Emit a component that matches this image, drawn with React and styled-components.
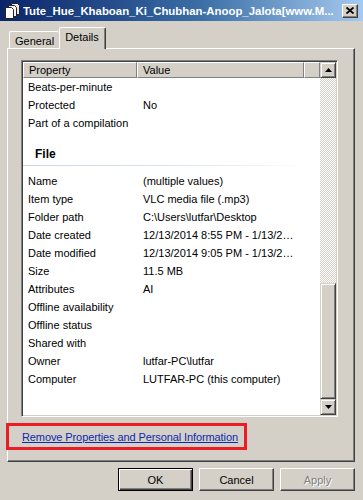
import React from "react";
import styled, { createGlobalStyle } from "styled-components";

const GlobalStyle = createGlobalStyle`
  html, body {
    margin: 0;
    padding: 0;
    background: #d4d0c8;
  }
  body {
    font-family: "Liberation Sans", Arial, sans-serif;
    font-size: 11px;
    color: #000;
  }
`;

const Window = styled.div`
  width: 363px;
  height: 500px;
  background: #d4d0c8;
  display: flex;
  flex-direction: column;
  overflow: hidden;
`;

const TitleBar = styled.div`
  height: 21px;
  display: flex;
  align-items: center;
  padding: 0 5px 0 4px;
  background: linear-gradient(to right, #0a246a 0%, #3a6ea5 55%, #a6caf0 100%);
`;

const TitleText = styled.div`
  flex: 1;
  margin-left: 3px;
  color: #fff;
  font-weight: bold;
  font-size: 11.4px;
  white-space: nowrap;
  overflow: hidden;
`;

const CloseButton = styled.div`
  width: 16px;
  height: 14px;
  box-sizing: border-box;
  background: #d4d0c8;
  border: 1px solid;
  border-color: #fff #404040 #404040 #fff;
  box-shadow: inset -1px -1px #808080;
  display: flex;
  align-items: center;
  justify-content: center;
`;

const Body = styled.div`
  padding: 6px 8px 0 7px;
  display: flex;
  flex-direction: column;
`;

const TabStrip = styled.div`
  display: flex;
  align-items: flex-end;
  height: 21px;
  padding-left: 2px;
  position: relative;
  z-index: 1;
`;

const Tab = styled.div`
  box-sizing: border-box;
  height: ${(p) => (p.$active ? "22px" : "17px")};
  margin-bottom: ${(p) => (p.$active ? "-1px" : "0")};
  padding: ${(p) => (p.$active ? "3px 6px 0 5px" : "3px 5px 0 5px")};
  background: #d4d0c8;
  border-top: 1px solid #fff;
  border-left: 1px solid #fff;
  border-right: 1px solid #404040;
  box-shadow: inset -1px 0 #808080;
  border-radius: 2px 2px 0 0;
  white-space: nowrap;
  ${(p) => !p.$active && "border-right: none; box-shadow: none;"}
`;

const Panel = styled.div`
  box-sizing: border-box;
  height: 414px;
  border: 1px solid;
  border-color: #fff #404040 #404040 #fff;
  box-shadow: inset -1px -1px #808080;
  padding: 11px 14px 0 13px;
  display: flex;
  flex-direction: column;
`;

const ListView = styled.div`
  box-sizing: border-box;
  width: 317px;
  height: 357px;
  border: 1px solid;
  border-color: #808080 #fff #fff #808080;
  box-shadow: inset 1px 1px #404040, inset -1px -1px #d4d0c8;
  padding: 1px;
  display: flex;
  background: #fff;
`;

const ListContent = styled.div`
  flex: 1;
  overflow: hidden;
`;

const HeaderRow = styled.div`
  display: flex;
  height: 16px;
`;

const HeaderCell = styled.div`
  box-sizing: border-box;
  width: ${(p) => p.$w};
  flex: ${(p) => (p.$fill ? 1 : "none")};
  height: 16px;
  line-height: 14px;
  padding-left: 5px;
  background: #d4d0c8;
  border-top: 1px solid #fff;
  border-left: 1px solid #fff;
  border-right: 1px solid #808080;
  border-bottom: 1px solid #808080;
`;

const Row = styled.div`
  display: grid;
  grid-template-columns: 114px 165px;
  height: 18px;
  line-height: 18px;
  white-space: nowrap;
`;

const Cell = styled.div`
  padding-left: ${(p) => (p.$value ? "6px" : "5px")};
  overflow: hidden;
`;

const Group = styled.div`
  padding-top: 13px;
  height: 40px;
  box-sizing: border-box;
`;

const GroupTitle = styled.div`
  font-weight: bold;
  font-size: 12px;
  line-height: 18px;
  padding-left: 12px;
`;

const GroupLine = styled.div`
  height: 1px;
  margin-top: 2px;
  width: 290px;
  background: linear-gradient(to right, #c5d5ea 0%, #dfe8f3 60%, #ffffff 100%);
`;

const ScrollBar = styled.div`
  width: 16px;
  display: flex;
  flex-direction: column;
  background-color: #fff;
  background-image: repeating-conic-gradient(#d4d0c8 0 25%, #ffffff 0 50%);
  background-size: 2px 2px;
`;

const ScrollButton = styled.div`
  box-sizing: border-box;
  width: 16px;
  height: 16px;
  background: #d4d0c8;
  border: 1px solid;
  border-color: #d4d0c8 #404040 #404040 #d4d0c8;
  box-shadow: inset 1px 1px #fff, inset -1px -1px #808080;
  display: flex;
  align-items: center;
  justify-content: center;
`;

const Track = styled.div`
  flex: 1;
  display: flex;
  flex-direction: column;
  justify-content: flex-end;
`;

const Thumb = styled.div`
  box-sizing: border-box;
  height: 116px;
  background: #d4d0c8;
  border: 1px solid;
  border-color: #d4d0c8 #404040 #404040 #d4d0c8;
  box-shadow: inset 1px 1px #fff, inset -1px -1px #808080;
`;

const LinkBox = styled.div`
  box-sizing: border-box;
  width: 241px;
  height: 27px;
  margin: 6px 0 0 -15px;
  border: 3px solid #ed1c24;
  padding-left: 13px;
  display: flex;
  align-items: center;
`;

const Link = styled.a`
  color: #0a2ab0;
  text-decoration: underline;
  cursor: pointer;
  white-space: nowrap;
  letter-spacing: -0.1px;
`;

const ButtonRow = styled.div`
  display: flex;
  justify-content: flex-end;
  gap: 6px;
  margin-top: 6px;
`;

const Button = styled.button`
  box-sizing: border-box;
  width: 75px;
  height: 23px;
  padding: 0;
  font-family: "Liberation Sans", Arial, sans-serif;
  font-size: 11px;
  background: #d4d0c8;
  color: ${(p) => (p.disabled ? "#808080" : "#000")};
  text-shadow: ${(p) => (p.disabled ? "1px 1px #fff" : "none")};
  border: 1px solid;
  border-color: ${(p) =>
    p.$default ? "#000" : "#fff #404040 #404040 #fff"};
  box-shadow: ${(p) =>
    p.$default
      ? "inset 1px 1px #fff, inset -1px -1px #404040, inset -2px -2px #808080"
      : "inset -1px -1px #808080"};
`;

const Arrow = ({ down }) => (
  <svg width="7" height="4" viewBox="0 0 7 4">
    <path d={down ? "M0 0h7L3.5 4z" : "M3.5 0L7 4H0z"} fill="#000" />
  </svg>
);

const AppIcon = () => (
  <svg width="16" height="16" viewBox="0 0 16 16">
    <path d="M7.5 0.5h6l2 2v9h-8z" fill="#e8e8e8" stroke="#222" />
    <path d="M4.5 2.5h6l2 2v9h-8z" fill="#f2f2f2" stroke="#222" />
    <path d="M1.5 4.5h6l2 2v9h-8z" fill="#fff" stroke="#222" />
  </svg>
);

const CloseGlyph = () => (
  <svg width="8" height="7" viewBox="0 0 8 7">
    <path d="M0.5 0.5L7.5 6.5M7.5 0.5L0.5 6.5" stroke="#000" strokeWidth="1.8" />
  </svg>
);

const topRows = [
  ["Beats-per-minute", ""],
  ["Protected", "No"],
  ["Part of a compilation", ""],
];

const fileRows = [
  ["Name", "(multiple values)"],
  ["Item type", "VLC media file (.mp3)"],
  ["Folder path", "C:\\Users\\lutfar\\Desktop"],
  ["Date created", "12/13/2014 8:55 PM - 1/13/2\u2026"],
  ["Date modified", "12/13/2014 9:05 PM - 1/13/2\u2026"],
  ["Size", "11.5 MB"],
  ["Attributes", "AI"],
  ["Offline availability", ""],
  ["Offline status", ""],
  ["Shared with", ""],
  ["Owner", "lutfar-PC\\lutfar"],
  ["Computer", "LUTFAR-PC (this computer)"],
];

const PropRow = ({ name, value }) => (
  <Row>
    <Cell>{name}</Cell>
    <Cell $value>{value}</Cell>
  </Row>
);

export default function App() {
  return (
    <Window>
      <GlobalStyle />
      <TitleBar>
        <AppIcon />
        <TitleText>Tute_Hue_Khaboan_Ki_Chubhan-Anoop_Jalota[www.M...</TitleText>
        <CloseButton>
          <CloseGlyph />
        </CloseButton>
      </TitleBar>
      <Body>
        <TabStrip>
          <Tab>General</Tab>
          <Tab $active>Details</Tab>
        </TabStrip>
        <Panel>
          <ListView>
            <ListContent>
              <HeaderRow>
                <HeaderCell $w="114px">Property</HeaderCell>
                <HeaderCell $w="167px">Value</HeaderCell>
                <HeaderCell $fill />
              </HeaderRow>
              {topRows.map(([n, v]) => (
                <PropRow key={n} name={n} value={v} />
              ))}
              <Group>
                <GroupTitle>File</GroupTitle>
                <GroupLine />
              </Group>
              {fileRows.map(([n, v]) => (
                <PropRow key={n} name={n} value={v} />
              ))}
            </ListContent>
            <ScrollBar>
              <ScrollButton>
                <Arrow />
              </ScrollButton>
              <Track>
                <Thumb />
              </Track>
              <ScrollButton>
                <Arrow down />
              </ScrollButton>
            </ScrollBar>
          </ListView>
          <LinkBox>
            <Link>Remove Properties and Personal Information</Link>
          </LinkBox>
        </Panel>
        <ButtonRow>
          <Button $default>OK</Button>
          <Button>Cancel</Button>
          <Button disabled>Apply</Button>
        </ButtonRow>
      </Body>
    </Window>
  );
}
